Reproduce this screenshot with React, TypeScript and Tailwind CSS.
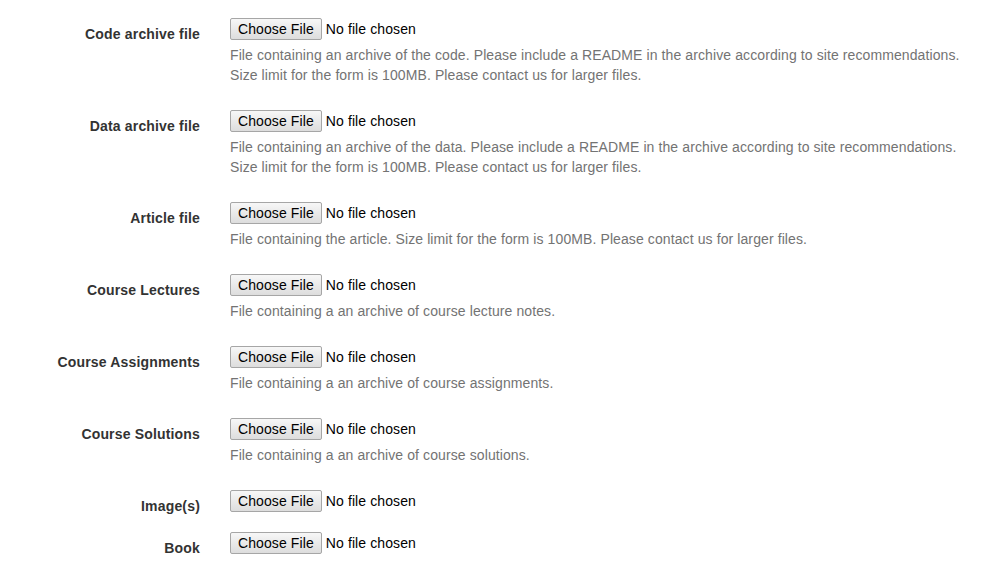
import React from "react";

type Row = { label: string; help?: string[] };

const rows: Row[] = [
  {
    label: "Code archive file",
    help: [
      "File containing an archive of the code. Please include a README in the archive according to site recommendations.",
      "Size limit for the form is 100MB. Please contact us for larger files.",
    ],
  },
  {
    label: "Data archive file",
    help: [
      "File containing an archive of the data. Please include a README in the archive according to site recommendations.",
      "Size limit for the form is 100MB. Please contact us for larger files.",
    ],
  },
  {
    label: "Article file",
    help: ["File containing the article. Size limit for the form is 100MB. Please contact us for larger files."],
  },
  { label: "Course Lectures", help: ["File containing a an archive of course lecture notes."] },
  { label: "Course Assignments", help: ["File containing a an archive of course assignments."] },
  { label: "Course Solutions", help: ["File containing a an archive of course solutions."] },
  { label: "Image(s)" },
  { label: "Book" },
];

function FileInput() {
  return (
    <div className="flex h-[22px] items-center text-[14px] tracking-[0.1px] text-black">
      <span className="flex h-[22px] items-center rounded-[2px] border border-[#a6a6a6] bg-gradient-to-b from-[#f7f7f7] to-[#dddddd] px-[7px] pb-[1px] leading-none text-black">
        Choose File
      </span>
      <span className="ml-[4px] pb-[1px] leading-none">No file chosen</span>
    </div>
  );
}

export default function App() {
  return (
    <div
      className="min-h-[571px] w-[1001px] bg-white pt-[18px]"
      style={{ fontFamily: '"Liberation Sans", Arial, sans-serif' }}
    >
      {rows.map((r) => (
        <div key={r.label} className="mb-[15px] flex">
          <div className="h-[27px] w-[200px] pb-[1px] pt-[6px] text-right text-[14px] font-bold leading-[20px] tracking-[0.17px] text-[#333333]">
            {r.label}
          </div>
          <div className="ml-[30px] flex flex-col">
            <FileInput />
            {r.help && (
              <div className="mb-[10px] mt-[5px] text-[14px] leading-[20px] tracking-[0.1px] text-[#737373]">
                {r.help.map((l) => (
                  <div key={l} className="whitespace-nowrap">
                    {l}
                  </div>
                ))}
              </div>
            )}
          </div>
        </div>
      ))}
    </div>
  );
}
